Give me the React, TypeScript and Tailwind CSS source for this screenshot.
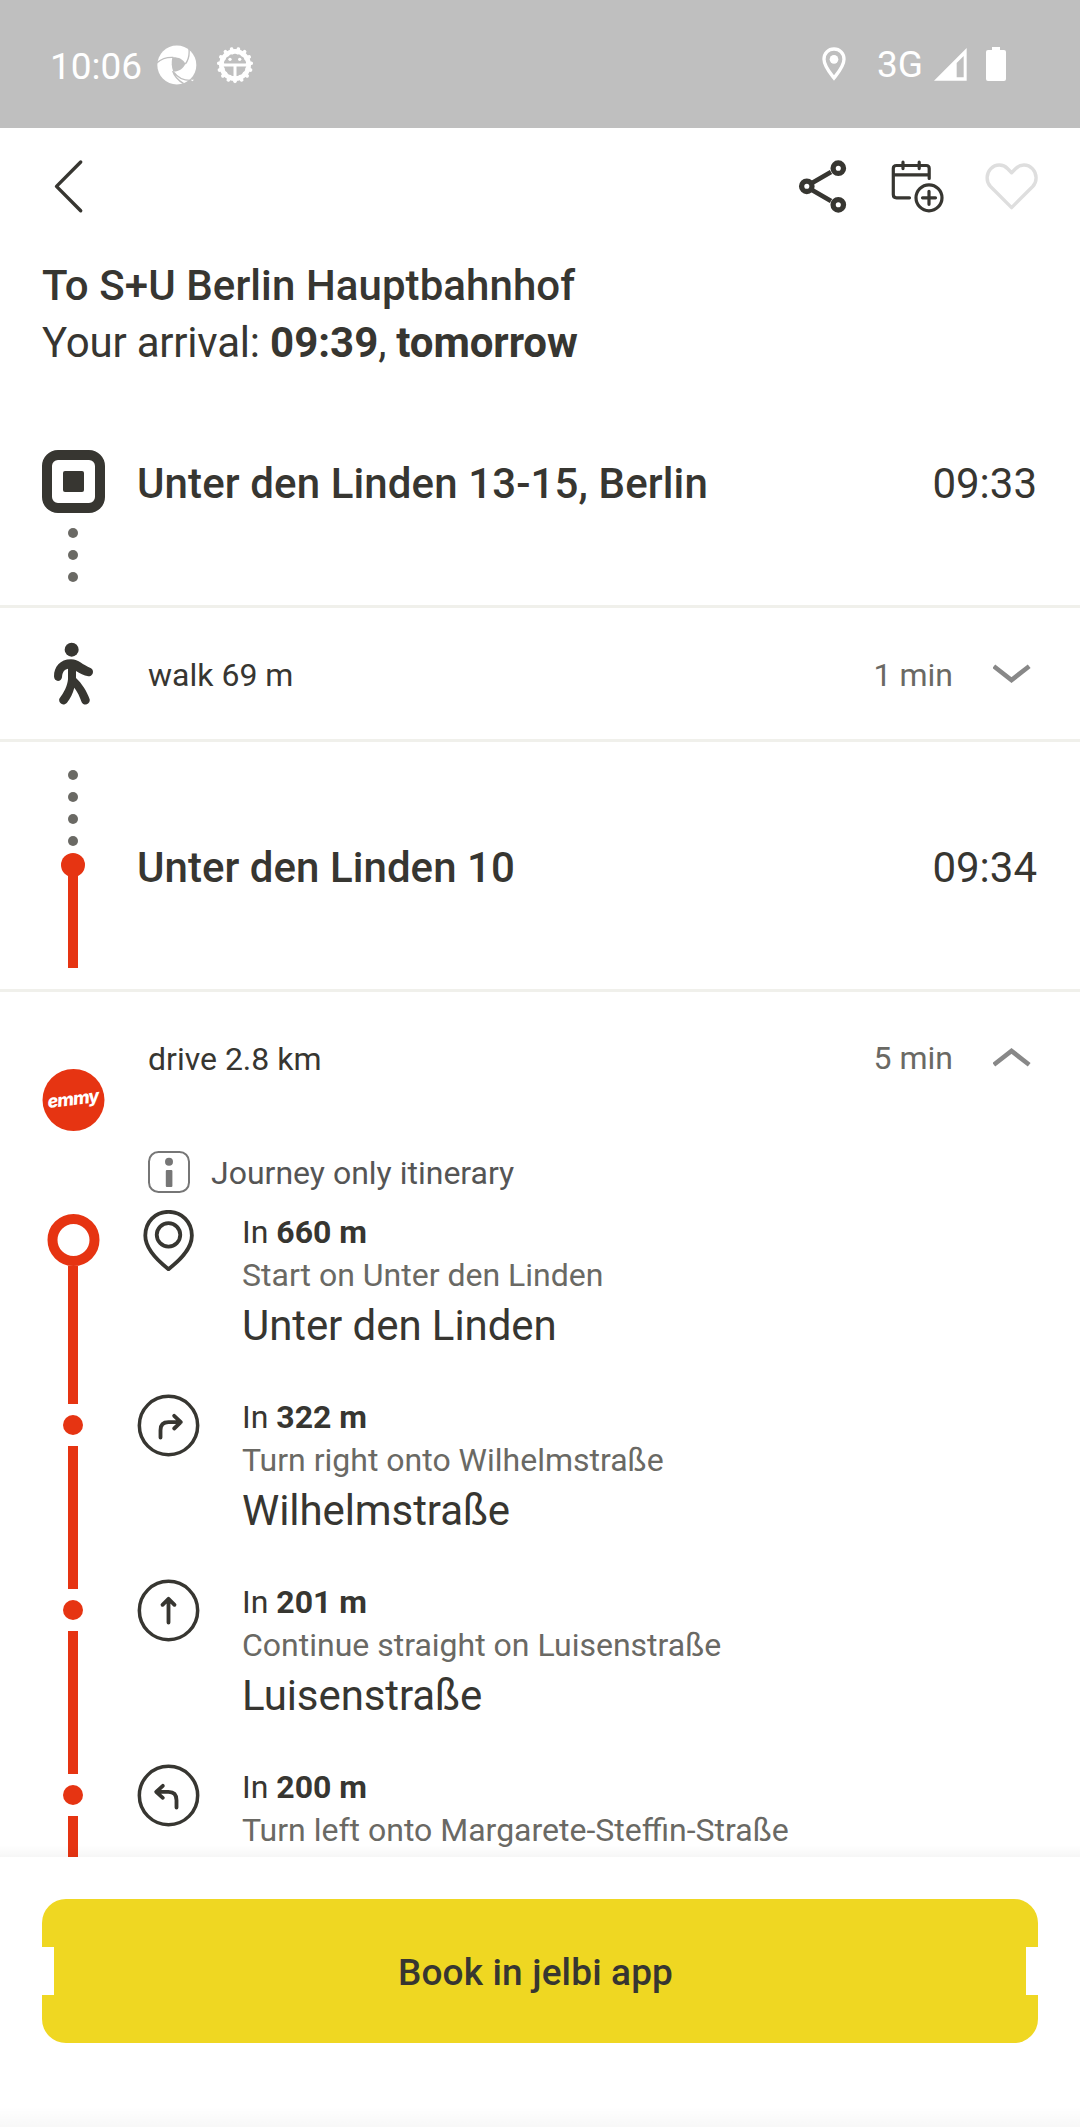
import React from "react";

type StepKind = "start" | "right" | "straight" | "left";

const steps: { kind: StepKind; distance: string; hint: string; street?: string }[] = [
  { kind: "start", distance: "660 m", hint: "Start on Unter den Linden", street: "Unter den Linden" },
  { kind: "right", distance: "322 m", hint: "Turn right onto Wilhelmstraße", street: "Wilhelmstraße" },
  { kind: "straight", distance: "201 m", hint: "Continue straight on Luisenstraße", street: "Luisenstraße" },
  { kind: "left", distance: "200 m", hint: "Turn left onto Margarete-Steffin-Straße" },
];

const arrows: Record<string, string> = {
  right: "M-24 36V14Q-24-10 0-10H36M17-29L37-10L17 9",
  straight: "M0-34V36M-18-17L0-35L18-17",
  left: "M24 36V14Q24-11 0-11H-36M-17-29L-37-11L-17 7",
};

/** Fifteen rounded teeth around the system notification gear. */
const gearTeeth = Array.from({ length: 15 }, (_, i) => {
  const a = Math.PI / 2 + (i * 2 * Math.PI) / 15;
  return { x: Math.cos(a), y: Math.sin(a) };
});

function StatusBar() {
  return (
    <div className="flex h-32 shrink-0 items-center bg-[#bfbfbf] pl-[50px] text-[37px] leading-none text-white">
      <span className="mt-1 w-[107px]">10:06</span>
      <svg className="mt-0.5 size-10 shrink-0" viewBox="471 136 120 120">
        <circle cx="530.5" cy="196" r="58.5" fill="#fff" />
        <path d="M517 173C535 172 548 178 556 192C550 206 538 215 520 216C514 202 514 188 517 173Z" fill="#bfbfbf" />
        <path
          d="M471 189C484 177 500 172 520 173M556 193C566 180 569 168 567 148M518 214C523 230 534 242 551 252M522 218C534 235 552 244 578 242"
          fill="none"
          stroke="#bfbfbf"
          strokeWidth="4"
        />
        <path d="M560 247L592 240V256H556Z" fill="#bfbfbf" />
        <path d="M572 240H582L577 245Z" fill="#fff" />
      </svg>
      <svg className="ml-[19px] mt-0.5 size-[38px] shrink-0" viewBox="-57 -57 114 114">
        {gearTeeth.map((t, i) => (
          <line key={i} x1={t.x * 38} y1={t.y * 38} x2={t.x * 49} y2={t.y * 49} stroke="#fff" strokeWidth="11" strokeLinecap="round" />
        ))}
        <circle r="41" fill="none" stroke="#fff" strokeWidth="14" />
        <path d="M-38 0H38M0 0V38" stroke="#fff" strokeWidth="9" />
        <circle cx="-15" cy="-17" r="5" fill="#fff" />
        <circle cx="14" cy="-17" r="5" fill="#fff" />
      </svg>
      <svg className="ml-[568px] h-[34px] w-6 shrink-0" viewBox="187 142 72 102">
        <path d="M223 148C206 148 193 161 193 179C193 200 212 221 223 235C234 221 253 200 253 179C253 161 240 148 223 148Z" fill="none" stroke="#fff" strokeWidth="10" />
        <circle cx="223" cy="179" r="13" fill="#fff" />
      </svg>
      <span className="ml-[31px] w-[57px]">3G</span>
      <svg className="h-[33px] w-[33px] shrink-0" viewBox="523 142 99 99">
        <path fillRule="evenodd" d="M523 240L621 142V240ZM591 187V230H612V166Z" fill="#fff" />
      </svg>
      <svg className="ml-[19px] h-[34px] w-5 shrink-0" viewBox="0 0 20 34">
        <path d="M6 0H14V3H18Q20 3 20 5V32Q20 34 18 34H2Q0 34 0 32V5Q0 3 2 3H6Z" fill="#fff" />
      </svg>
    </div>
  );
}

function Toolbar() {
  return (
    <div className="flex h-[129px] shrink-0 items-start pl-[53px] pt-[31px] text-[#373631]">
      <svg className="h-[55px] w-8" viewBox="53 159 32 55" fill="none" stroke="currentColor" strokeWidth="3.4" strokeLinecap="round" strokeLinejoin="round">
        <path d="M80.7 162L56.5 186.4L80.7 210.8" />
      </svg>
      <svg className="ml-[713px] h-[55px] w-[50px]" viewBox="798 159 50 55" fill="none" stroke="currentColor" strokeWidth="5.3">
        <path d="M831 172L812 183M812 190L831 201" strokeWidth="4.8" />
        <circle cx="838.3" cy="168.2" r="5.2" />
        <circle cx="806.8" cy="186.3" r="5.2" />
        <circle cx="838.3" cy="204.8" r="5.2" />
      </svg>
      <svg className="ml-10 h-[55px] w-[58px]" viewBox="888 159 58 55" fill="none" stroke="currentColor" strokeWidth="3.2" strokeLinecap="round">
        <path d="M929.2 178.5V168.5Q929.2 165.5 926.2 165.5H896.5Q893.3 165.5 893.3 168.5V194.5Q893.3 197.8 896.5 197.8H909.5" />
        <path d="M894 174.9H928M903 162.2V168.6M919.2 162.2V168.6" />
        <circle cx="929" cy="197.8" r="13" />
        <path d="M922.5 197.8H935.5M929 191.3V204.3" />
      </svg>
      <svg className="ml-9 h-[55px] w-[58px] text-[#dedede]" viewBox="982 159 58 55" fill="none" stroke="currentColor" strokeWidth="3.4" strokeLinejoin="round">
        <path d="M1011.6 207.6L990.5 186.5C985.8 181.5 986.2 173.6 990.6 168.9C995.5 163.8 1003 163.8 1007.7 168.7L1011.6 172.7L1015.5 168.7C1020.2 163.8 1027.7 163.8 1032.6 168.9C1037 173.6 1037.4 181.5 1032.7 186.5Z" />
      </svg>
    </div>
  );
}

function Dots({ count }: { count: number }) {
  return (
    <div className="flex flex-col gap-3">
      {Array.from({ length: count }, (_, i) => (
        <div key={i} className="size-2.5 rounded-full bg-[#6a6964]" />
      ))}
    </div>
  );
}

function Chevron({ up = false }: { up?: boolean }) {
  return (
    <svg className="ml-10 mr-[49px] h-5 w-[38px]" viewBox="0 0 38 20" fill="none" stroke="#888" strokeWidth="4.6">
      <path d={up ? "M.8 17.7L18.5 4L36.2 17.7" : "M.8 2.3L18.5 16L36.2 2.3"} />
    </svg>
  );
}

function StepIcon({ kind }: { kind: StepKind }) {
  if (kind === "start") {
    return (
      <svg className="ml-[6px] mr-[6px] mt-px h-[61px] w-[51px] shrink-0" viewBox="429 569 153 184" fill="none" stroke="#373631" strokeWidth="11.5" strokeLinejoin="round">
        <path d="M505.5 574.5C465 574.5 435.500 605 435.500 646C435.500 690 478 726 505.500 747.500C533 726 576 690 576 646C576 605 546 574.500 505.500 574.500Z" />
        <circle cx="505.500" cy="644" r="35.500" />
      </svg>
    );
  }
  return (
    <svg className="size-[63px] shrink-0" viewBox="-94.5 -94.5 189 189" fill="none" stroke="#373631" strokeWidth="11.5" strokeLinejoin="round">
      <circle r="87.500" strokeWidth="10.500" />
      <path d={arrows[kind]} strokeLinecap="round" />
    </svg>
  );
}

const Divider = () => <div className="h-[3px] shrink-0 bg-[#f0f0eb]" />;

function Rail() {
  return (
    <div className="flex w-[146px] shrink-0 flex-col items-center pt-[77px]">
      <div className="flex size-[62px] shrink-0 translate-x-[0.5px] items-center justify-center rounded-full bg-[#e63412]">
        <span className="-rotate-[7deg] pb-[2px] font-[Inter] text-[18px] font-extrabold italic leading-none tracking-[-0.9px] text-white">emmy</span>
      </div>
      <div className="mt-[83px] size-[52px] shrink-0 translate-x-[0.5px] rounded-full border-[10.5px] border-[#e63412]" />
      <div className="h-[138px] w-2.5 shrink-0 bg-[#e63412]" />
      {[0, 1, 2].map((i) => (
        <React.Fragment key={i}>
          <div className="my-[11px] size-5 shrink-0 rounded-full bg-[#e63412]" />
          <div className="h-[143px] w-2.5 shrink-0 bg-[#e63412]" />
        </React.Fragment>
      ))}
    </div>
  );
}

export default function App() {
  return (
    <div className="flex h-[2127px] w-[1080px] flex-col overflow-hidden bg-white font-[Roboto,sans-serif] text-[#373631]">
      <StatusBar />
      <Toolbar />
      <div className="h-[114px] shrink-0 pl-[42px] text-[42px] leading-[57px]">
        <div className="font-medium tracking-[0.08px]">To S+U Berlin Hauptbahnhof</div>
        <div>
          <span className="tracking-[-0.2px]">Your arrival: </span>
          <b className="font-bold">09:39</b>
          <span className="tracking-[-0.4px]">, </span>
          <b className="font-bold tracking-[-0.08px]">tomorrow</b>
        </div>
      </div>

      <div className="h-[234px] shrink-0 pt-[79px]">
        <div className="flex h-[63px] items-center text-[42px] leading-none">
          <div className="ml-[42px] flex size-[63px] items-center justify-center rounded-[16px] border-[10.5px] border-[#373631]">
            <div className="size-[21px] rounded-[2px] bg-[#373631]" />
          </div>
          <span className="ml-8 mt-1 font-medium tracking-[0.11px]">Unter den Linden 13-15, Berlin</span>
          <span className="ml-auto mr-[43px] mt-1">09:33</span>
        </div>
        <div className="flex w-[146px] justify-center pt-[15px]">
          <Dots count={3} />
        </div>
      </div>

      <Divider />
      <div className="flex h-[131px] shrink-0 items-center text-[32px] leading-none">
        <svg className="ml-[52px] h-[64px] w-[43px]" viewBox="156 125 129 192" fill="none" stroke="#373631" strokeWidth="24" strokeLinecap="round" strokeLinejoin="round">
          <circle cx="215" cy="148" r="21" fill="#373631" stroke="none" />
          <path
            d="M162 228C162 200 180 177 213 177C238 178 246 193 273 204C284 210 279 229 265 228C251 226 240 219 228 212V233C246 250 261 273 269 297C272 312 252 319 245 306C239 288 232 274 223 262C218 280 212 293 201 307C190 319 174 309 178 295C192 277 202 257 204 237V205C192 208 187 216 186 231C184 246 162 246 162 228Z"
            fill="#373631"
            stroke="none"
          />
        </svg>
        <span className="ml-[53px] mt-[3px]">walk 69 m</span>
        <span className="ml-auto mt-0.5 text-[#6a6964]">1 min</span>
        <Chevron />
      </div>
      <Divider />

      <div className="flex h-[247px] shrink-0 text-[42px] leading-none">
        <div className="flex w-[146px] flex-col items-center pt-7">
          <Dots count={4} />
          <div className="mt-[7px] size-6 rounded-full bg-[#e63412]" />
          <div className="-mt-1 h-[95px] w-2.5 bg-[#e63412]" />
        </div>
        <span className="ml-[-9px] mt-[105px] font-medium tracking-[0.04px]">Unter den Linden 10</span>
        <span className="ml-auto mr-[43px] mt-[105px]">09:34</span>
      </div>

      <Divider />
      <div className="flex h-[865px] shrink-0 overflow-hidden">
        <Rail />
        <div className="ml-[-9px] flex-1">
          <div className="flex h-[134px] items-center text-[32px] leading-none">
            <span className="ml-[11px]">drive 2.8 km</span>
            <span className="-mt-0.5 ml-auto text-[#6a6964]">5 min</span>
            <div className="-mt-1">
              <Chevron up />
            </div>
          </div>
          <div className="flex h-[83px] items-start pl-[11px] pt-[25px]">
            <svg className="size-[42px]" viewBox="0 0 42 42" fill="#767676">
              <rect x="1" y="1" width="40" height="40" rx="9.500" fill="none" stroke="#767676" strokeWidth="2" />
              <circle cx="21" cy="10.800" r="4" />
              <rect x="17.800" y="19" width="6.600" height="17" rx="1" />
            </svg>
            <span className="ml-[21px] text-[32px] leading-[44px] text-[#555]">Journey only itinerary</span>
          </div>
          {steps.map((s) => (
            <div key={s.kind} className="flex h-[185px]">
              <StepIcon kind={s.kind} />
              <div className="ml-[42px] pt-0.5 text-[32px] leading-[43px]">
                <div>
                  In <b className="font-bold">{s.distance}</b>
                </div>
                <div className="text-[#6a6964]">{s.hint}</div>
                {s.street && <div className="text-[42px] leading-[58px] tracking-[-0.08px]">{s.street}</div>}
              </div>
            </div>
          ))}
        </div>
      </div>

      <div className="relative flex h-[270px] shrink-0 flex-col bg-white px-[42px] pt-[42px]">
        <div className="absolute -top-3 left-0 h-3 w-full bg-linear-to-b from-black/0 to-black/[0.035]" />
        <button className="relative flex h-36 items-center justify-center rounded-[24px] bg-[#efd722] text-[37px] font-medium leading-none">
          <span className="absolute left-0 top-12 h-12 w-3 bg-white" />
          <span className="absolute right-0 top-12 h-12 w-3 bg-white" />
          <span className="mr-[9px] mt-0.5 tracking-[0.15px]">Book in jelbi app</span>
        </button>
        <div className="absolute bottom-0 left-0 h-5 w-full bg-linear-to-b from-black/0 to-black/[0.03]" />
      </div>
    </div>
  );
}
